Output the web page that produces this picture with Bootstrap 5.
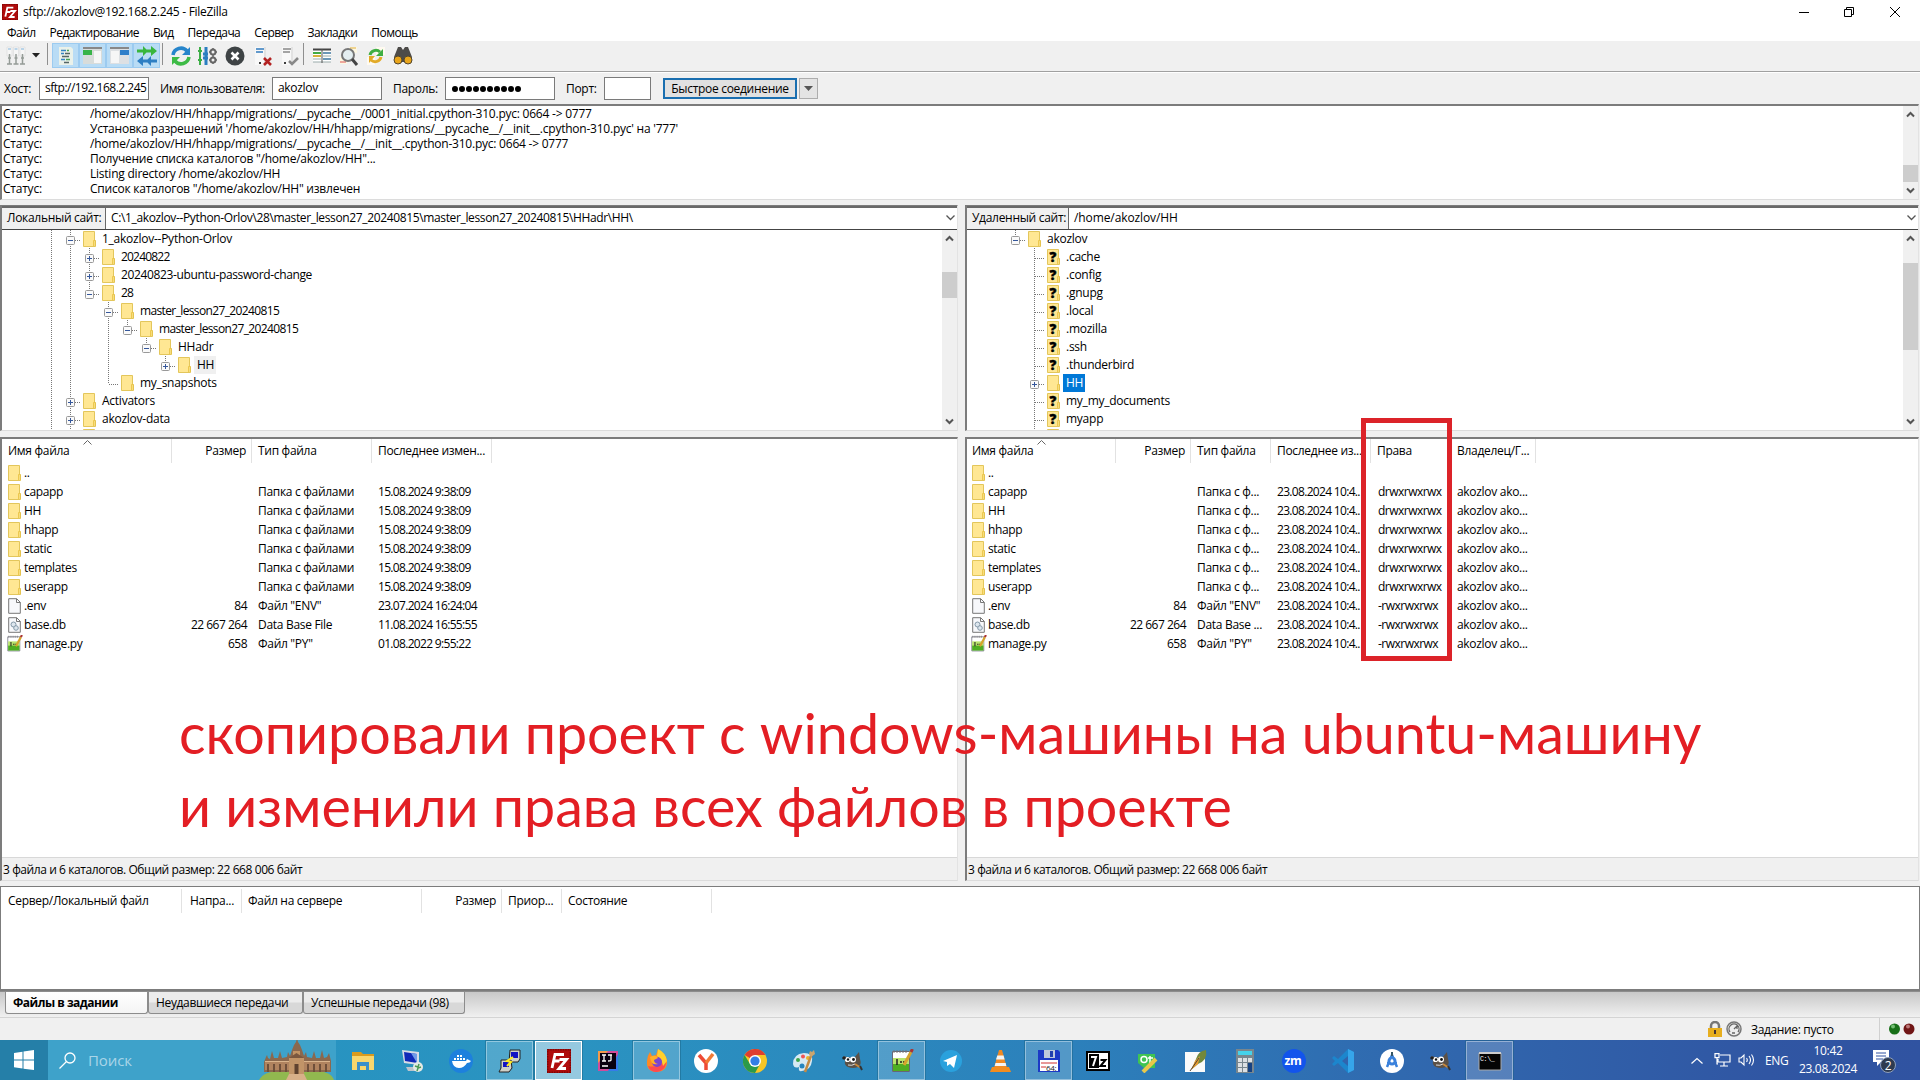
<!DOCTYPE html>
<html lang="ru">
<head>
<meta charset="utf-8">
<title>sftp://akozlov@192.168.2.245 - FileZilla</title>
<link href="https://cdn.jsdelivr.net/npm/bootstrap@5.3.0/dist/css/bootstrap.min.css" rel="stylesheet">
<style>
body{width:1920px;height:1080px;overflow:hidden;background:#f0f0f0;color:#000;font:12px/15px "Open Sans","Noto Sans",sans-serif;letter-spacing:-.3px;white-space:nowrap}
svg{display:block;flex:none}
.winbar{height:25px;padding:0 18px 2px 2px}
.winbar .caption{margin-left:5px;letter-spacing:-.28px}
.menus{height:16px;padding:0 0 2px 7px;gap:14px;letter-spacing:-.55px}
.tools{height:31px;border-bottom:1px solid #a0a0a0;box-shadow:0 1px #fff;padding:2px 0 0 2px}
.tools .cell{width:27px;height:25px;display:grid;place-items:center}
.tools .narrow{width:14px}
.tools .on{background:#b9dcf5;box-shadow:inset 0 0 0 1px #9ccbf0}
.bar{width:1px;height:22px;background:#8f8f8f}
.tools .bar{margin:0 4px 0 1px}
.tools .first{margin-left:4px}
.quick{height:32px;padding:0 0 0 4px}
.quick .field{height:23px;border:1px solid #7a7a7a;background:#fff;padding:2px 5px;overflow:hidden}
.quick label{flex:none}
.quick .go{height:21px;width:134px;border:2px solid #1a6fb0;background:#e1e1e1;text-align:center;line-height:18px;margin:1px 0 0 12px}
.quick .drop{height:21px;width:19px;border:1px solid #adadad;background:#e4e4e4;margin:1px 0 0 2px;display:grid;place-items:center}
.sunk{background:#fff;border:solid;border-width:2px 1px 1px 2px;border-color:#7c7c7c #e3e3e3 #dcdcdc #7c7c7c;overflow:hidden}
.log{height:96px;margin-right:1px;letter-spacing:-.23px}
.log .lines{padding:0 0 0 1px}
.log .lines span:first-child{width:87px}
.scroller{width:15px;background:#f0f0f0;padding:5px 0}
.scroller .thumb{width:15px;background:#cdcdcd}
.panes{gap:7px;padding-right:1px;margin-top:5px}
.site{height:24px;border-top:2px solid #696969;border-bottom:1px solid #444}
.site .tag{background:#f0f0f0;border-right:1px solid #696969;padding:2px 0 0 5px;height:21px}
.site .path{padding:2px 2px 0 5px}
.longpath{letter-spacing:-.36px}
.upper{height:226px;border-top-width:1px}
.node{height:18px}
.node .name{margin-left:3px;padding:0 2px 0 3px;line-height:17px;height:18px;letter-spacing:-.25px}
.node .t8{letter-spacing:-.8px}
.node .t6{letter-spacing:-.63px}
.node .t3{letter-spacing:-.36px}
.sel{background:#0078d7;color:#fff}
.dim{background:#f0f0f0}
.lower{height:444px;margin-top:6px}
.heads{height:24px}
.heads>span{border-right:1px solid #e2e2e2;padding:4px 5px 0 6px;overflow:hidden}
.heads .num,.files .num{text-align:right;padding-right:5px}
.gl{display:grid;grid-template-columns:170px 80px 120px 120px}
.gr{display:grid;grid-template-columns:149px 75px 80px 100px 79px 86px}
.files{height:19px;align-items:center}
.files>span{padding-left:6px}
.files .num{letter-spacing:-.5px}
.files .when{letter-spacing:-.68px}
.files .perm{letter-spacing:-.52px}
.gr>.perm,.gr>.own{padding-left:7px}
.files .nm{padding-left:3px;letter-spacing:-.35px}
.mark-sort{position:absolute;top:1px}
.totals{height:23px;background:#f0f0f0;border-top:1px solid #d8d8d8;padding:4px 0 0 1px;letter-spacing:-.42px}
.queue{height:105px;margin-top:5px;border-color:#7c7c7c;border-width:1px 1px 2px 1px}
.gq{display:grid;grid-template-columns:181px 60px 180px 80px 60px 150px;height:26px;padding-top:2px}
.strip{height:27px;border-top:1px solid #8c8c8c;border-bottom:1px solid #d4d4d4;background:linear-gradient(#c8c8c8,#f0f0f0);padding-left:5px}
.strip .tabb{height:22px;border:1px solid #8c8c8c;border-top:0;border-radius:0 0 3px 3px;background:linear-gradient(#ececec 48%,#d8d8d8 52%);padding:3px 0 0 7px;letter-spacing:-.35px}
.strip .cur{background:linear-gradient(#fff,#f4f4f4);font-weight:700;letter-spacing:-.5px}
.foot{height:22px;padding-right:5px}
.task{height:40px;background:linear-gradient(90deg,#2594c0 0,#2a93c1 30%,#2c80bb 56%,#3069af 73%,#3056a3 92%,#3053a1);color:#fff}
.start{width:48px;background:#257fa8;display:grid;place-items:center}
.seek{width:288px;background:#3ea2ca;color:#a9d5e8;font-size:15px;padding-left:11px}
.seek .word{margin-left:12px;letter-spacing:-.1px}
.apps{padding-left:2px}
.apps>div{width:47px;height:39px;margin:1px 1px 0;display:grid;place-items:center}
.apps .run{background:#ffffff30;box-shadow:inset 0 0 0 1px #ffffff60,0 0 0 1px #18607f70}
.apps .act{background:#ffffff80;box-shadow:inset 0 0 0 1px #fff,0 0 0 1px #18607f70}
.tray{padding-right:24px}
.clock{width:76px;line-height:18px;text-align:center}
.redbox{position:absolute;left:1361px;top:418px;width:91px;height:243px;border:5px solid #dc2329}
.remark{position:absolute;left:179px;top:696px;font:55.6px/73px Lato,"Open Sans",sans-serif;color:#e31e24;letter-spacing:0}
</style>
<script src="https://cdn.jsdelivr.net/npm/bootstrap@5.3.0/dist/js/bootstrap.bundle.min.js"></script>
</head>
<body class="position-relative">
<svg width="0" height="0" class="position-absolute">
 <symbol id="fz" viewBox="0 0 24 24"><rect width="24" height="24" fill="#b00c0c"/><rect x=".7" y=".7" width="22.6" height="22.6" fill="none" stroke="#7d0606" stroke-width="1.4" stroke-dasharray="1.5 1"/><path d="M5 19 8 5.500h9M6.500 12h6M12.500 10.500h7l-7.500 9h7" fill="none" stroke="#fff" stroke-width="2.800"/></symbol>
 <symbol id="fold" viewBox="0 0 13 16"><path d="M.5.5h11v9h1v6H.5z" fill="#ffe793" stroke="#e3c65b"/><path d="M10.500 15v-5.500h1.500v5.500" fill="#fff0a8" stroke="#e8bf3c" stroke-width=".8"/></symbol>
 <symbol id="page" viewBox="0 0 13 16"><path d="M.7.7h8l3.600 3.600v11H.7z" fill="#f7f8fb" stroke="#777"/><path d="M8.500.7v3.800h3.800" fill="none" stroke="#777"/></symbol>
 <symbol id="npp" viewBox="0 0 24 24"><path d="M2.500 2.500h17v20h-17z" fill="#fff" stroke="#667"/><path d="M3 9h16v7H3z" fill="#b9e36b"/><path d="M3 15h16v7H3z" fill="#4fae22"/><path d="M4 1v3M7 1v3M10 1v3M13 1v3M16 1v3" stroke="#777"/><path d="M7 10v6M10 13h2M13 13h2" stroke="#222" stroke-width="1.500"/><path d="M21 3 14 16" stroke="#d6a42c" stroke-width="3"/><path d="m22.500 0-1.500 3" stroke="#a33" stroke-width="3"/></symbol>
 <symbol id="gimp" viewBox="0 0 24 24"><path d="M2 7 6 8l7 1 5-6 1 7q2 6-2 8-5 2-10 0-4-2-3-6z" fill="#5b5147"/><circle cx="6.500" cy="10.500" r="2.600" fill="#fff"/><circle cx="12" cy="10.500" r="3" fill="#fff"/><circle cx="7" cy="10.500" r="1.200" fill="#111"/><circle cx="12.500" cy="10.500" r="1.400" fill="#111"/><ellipse cx="3" cy="9" rx="1.800" ry="1.500" fill="#222"/><path d="M7 16q4 1 7-1" stroke="#ddd" fill="none"/><path d="m14 15 6 4" stroke="#c98a3c" stroke-width="1.800"/><path d="m19 17 2 4" stroke="#333" stroke-width="2"/></symbol>
 <symbol id="srv" viewBox="0 0 20 20"><path d="M3 1h11v18H3z" fill="#e2e2e2"/><path d="M3 1h9v18H3z" fill="#f8f8f8"/></symbol>
 <symbol id="up" viewBox="0 0 9 7"><path d="M1 5.500 4.500 2 8 5.500" fill="none" stroke="#555" stroke-width="2"/></symbol>
 <symbol id="dn" viewBox="0 0 9 7"><path d="M1 1.500 4.500 5 8 1.500" fill="none" stroke="#555" stroke-width="2"/></symbol>
</svg>

<header class="bg-white">
 <div class="winbar d-flex align-items-center"><svg width="16" height="16"><use href="#fz"/></svg><span class="caption flex-grow-1">sftp://akozlov@192.168.2.245 - FileZilla</span>
  <svg width="104" height="12" fill="none" stroke="#000"><path d="M1 6.500h10M46.500 3.500h7v7h-7zM48.500 3v-1.500h7v7h-2M92 1l10 10M102 1 92 11"/></svg></div>
 <nav class="menus d-flex align-items-center"><span>Файл</span><span>Редактирование</span><span>Вид</span><span>Передача</span><span>Сервер</span><span>Закладки</span><span>Помощь</span></nav>
</header>

<div class="tools d-flex align-items-start">
 <div class="cell"><svg width="20" height="20"><path d="M1 1h5v9H1zM7.500 1h5v9h-5zM14 1h5v9h-5z" fill="#f6f6f6" stroke="#ddd" stroke-width=".7"/><path d="M2 3h3M8.500 3h3M15 3h3" stroke="#7fb3dc"/><path d="M3.500 8v10M10 8v10M16.500 8v10M1 18h5M7.500 18h5M14 18h5M2 12h3M8.500 12h3M15 12h3" stroke="#949b96" stroke-width="1.500" fill="none"/></svg></div>
 <div class="cell narrow"><svg width="8" height="5"><path d="M0 0h8L4 4.500z" fill="#222"/></svg></div>
 <div class="bar first"></div>
 <div class="cell on"><svg width="20" height="20"><path d="M3 1h12l2 2v16H3z" fill="#eaf1ea"/><path d="M5 4.500h5M5 7.500h3M5 13.500h4" stroke="#3584c4" stroke-width="1.300"/><path d="M9 7.500h5M6 10.500h7M8 16.500h5" stroke="#566" stroke-width="1.300"/><path d="M11 4.500h2M10 13.500h4" stroke="#47a356" stroke-width="1.300"/></svg></div>
 <div class="cell on"><svg width="20" height="20"><path d="M0 1h19v17H0z" fill="#d8dcda"/><path d="M0 2h19" stroke="#888" stroke-width="2"/><path d="M0 4h9v5H0z" fill="#38b449"/><path d="M11 5h7v12h-7z" fill="#f6f6f6"/></svg></div>
 <div class="cell on"><svg width="20" height="20"><path d="M0 1h19v17H0z" fill="#dde0e3"/><path d="M0 2h19" stroke="#888" stroke-width="2"/><path d="M10 4h9v5h-9z" fill="#2f7fc9"/><path d="M1 5h8v12H1z" fill="#f6f6f6"/></svg></div>
 <div class="cell on"><svg width="20" height="20"><path d="M0 3.500h6V0l5 5-5 5V6.500H0zM9 3.500h5V0l6 5-6 5V6.500H9z" fill="#38b63e"/><path d="M20 13.500h-6V10l-5 5 5 5v-3.500h6zM11 13.500H6V10l-6 5 6 5v-3.500h5z" fill="#2e7fc3"/></svg></div>
 <div class="bar first" style="margin-left:2px"></div>
 <div class="cell"><svg width="20" height="20" fill="none" stroke-width="3.500"><path d="M2 9a8 8 0 0 1 14-4" stroke="#2785cb"/><path d="M19 1v8h-8z" fill="#2785cb"/><path d="M18 11a8 8 0 0 1-14 4" stroke="#3dbb46"/><path d="M1 19v-8h8z" fill="#3dbb46"/></svg></div>
 <div class="cell"><svg width="20" height="20" fill="none"><path d="M2 1v18M0 5h4M0 14h4" stroke="#3dae46" stroke-width="2"/><path d="M8 1v18M5 8h5M5 12h5" stroke="#2b7fc0" stroke-width="3"/><circle cx="15" cy="6" r="2.500" stroke="#666" stroke-width="2"/><circle cx="15" cy="14" r="2.500" stroke="#666" stroke-width="2"/><path d="M15 2v1M15 9v2M15 17v1M11 6h1M18 6h1M11 14h1M18 14h1" stroke="#666" stroke-width="1.500"/></svg></div>
 <div class="cell"><svg width="20" height="20"><circle cx="10" cy="10" r="9.500" fill="#3e4345"/><path d="m6.500 6.500 7 7M13.500 6.500l-7 7" stroke="#fff" stroke-width="2.600"/></svg></div>
 <div class="cell"><svg width="20" height="20"><use href="#srv"/><path d="M4 3h8M4 6h7" stroke="#2f79bd" stroke-width="1.500"/><circle cx="8" cy="17" r="1"/><path d="m12 12 7 7M19 12l-7 7" stroke="#b32222" stroke-width="2.600"/></svg></div>
 <div class="cell"><svg width="20" height="20"><use href="#srv"/><path d="M4 3h8M4 6h7" stroke="#888" stroke-width="1.500"/><circle cx="6" cy="17" r="1"/><path d="m10 15 3 3 6-6" stroke="#888" stroke-width="2.600" fill="none"/></svg></div>
 <div class="bar"></div>
 <div class="cell"><svg width="20" height="20"><path d="M1 3h18v13H1z" fill="#fff"/><path d="M1 3.500h18" stroke="#444" stroke-width="2"/><path d="M1 7h8" stroke="#43ab43" stroke-width="2"/><path d="M11 7h8M11 13h8" stroke="#3d75a0" stroke-width="1.500"/><path d="M1 10h8" stroke="#d6b23b" stroke-width="2"/><path d="M1 13h8M1 16h18M11 10h8" stroke="#9aa"/><path d="M10 3v14" stroke="#555"/></svg></div>
 <div class="cell"><svg width="20" height="20"><path d="M10 1h8v6h-8zM1 11h7v7H1z" fill="#fdf7e2"/><path d="M11 2h6" stroke="#e0b040"/><path d="M1 16h6" stroke="#d55"/><circle cx="9" cy="9" r="6" fill="#e4eef0" stroke="#777" stroke-width="2"/><path d="m13 13 5 6" stroke="#444" stroke-width="3"/></svg></div>
 <div class="cell"><svg width="20" height="20" fill="none"><path d="M10 1h9v8h-9zM1 11h8v8H1z" fill="#fffaf0"/><path d="M4 9a6 6 0 0 1 10-3" stroke="#3fae43" stroke-width="3"/><path d="M17 3v7h-7z" fill="#3fae43"/><path d="M15 11a6 6 0 0 1-10 3" stroke="#e2aa27" stroke-width="3"/><path d="M3 17v-7h6z" fill="#e2aa27"/></svg></div>
 <div class="cell"><svg width="20" height="20"><path d="M5 1h3l2 3 2-3h3l4 10v5H1v-5z" fill="#4d4b49"/><circle cx="5" cy="14" r="4" fill="#e9a51b" stroke="#51462f"/><circle cx="15" cy="14" r="4" fill="#e9a51b" stroke="#51462f"/></svg></div>
</div>

<div class="quick d-flex align-items-center">
 <label style="width:35px">Хост:</label><div class="field" style="width:110px;letter-spacing:-.5px">sftp://192.168.2.245</div>
 <label style="width:123px;padding-left:11px;letter-spacing:-.42px">Имя пользователя:</label><div class="field" style="width:110px">akozlov</div>
 <label style="width:63px;padding-left:11px">Пароль:</label><div class="field" style="width:110px"><svg width="72" height="17"><path d="M4 9h64" stroke="#000" stroke-width="6" stroke-linecap="round" stroke-dasharray="0 7"/></svg></div>
 <label style="width:49px;padding-left:11px">Порт:</label><div class="field" style="width:47px"></div>
 <div class="go">Быстрое соединение</div><div class="drop"><svg width="9" height="5"><path d="M0 0h9L4.500 5z" fill="#555"/></svg></div>
</div>

<div class="log sunk d-flex justify-content-between">
 <div class="lines" id="log"></div>
 <div class="scroller d-flex flex-column align-items-center"><svg width="9" height="7"><use href="#up"/></svg><div class="thumb" style="height:17px;margin-top:47px"></div><svg width="9" height="7" class="mt-auto"><use href="#dn"/></svg></div>
</div>

<main class="panes d-flex">
 <section style="width:958px">
  <div class="upper sunk">
   <div class="site d-flex"><div class="tag" style="width:104px">Локальный сайт:</div><div class="path d-flex flex-grow-1 justify-content-between align-items-start"><span class="longpath">C:\1_akozlov--Python-Orlov\28\master_lesson27_20240815\master_lesson27_20240815\HHadr\HH\</span><svg width="9" height="7" class="mt-1"><path d="m.5 1.500 4 4 4-4" fill="none" stroke="#555" stroke-width="1.300"/></svg></div></div>
   <div class="d-flex justify-content-between" style="height:200px"><div style="padding-left:40px" id="lt"></div>
    <div class="scroller d-flex flex-column align-items-center"><svg width="9" height="7"><use href="#up"/></svg><div class="thumb" style="height:26px;margin-top:30px"></div><svg width="9" height="7" class="mt-auto"><use href="#dn"/></svg></div></div>
  </div>
  <div class="lower sunk d-flex flex-column position-relative">
   <svg class="mark-sort" style="left:81px" width="9" height="5"><path d="m.5 4.500 4-4 4 4" fill="none" stroke="#666"/></svg>
   <div class="heads gl"><span>Имя файла</span><span class="num">Размер</span><span>Тип файла</span><span>Последнее измен...</span></div>
   <div id="lf"></div><div class="totals mt-auto">3 файла и 6 каталогов. Общий размер: 22 668 006 байт</div>
  </div>
 </section>
 <section style="width:954px">
  <div class="upper sunk">
   <div class="site d-flex"><div class="tag" style="width:102px">Удаленный сайт:</div><div class="path d-flex flex-grow-1 justify-content-between align-items-start"><span style="letter-spacing:-.1px">/home/akozlov/HH</span><svg width="9" height="7" class="mt-1"><path d="m.5 1.500 4 4 4-4" fill="none" stroke="#555" stroke-width="1.300"/></svg></div></div>
   <div class="d-flex justify-content-between" style="height:200px"><div style="padding-left:39px" id="rt"></div>
    <div class="scroller d-flex flex-column align-items-center"><svg width="9" height="7"><use href="#up"/></svg><div class="thumb" style="height:87px;margin-top:21px"></div><svg width="9" height="7" class="mt-auto"><use href="#dn"/></svg></div></div>
  </div>
  <div class="lower sunk d-flex flex-column position-relative">
   <svg class="mark-sort" style="left:70px" width="9" height="5"><path d="m.5 4.500 4-4 4 4" fill="none" stroke="#666"/></svg>
   <div class="heads gr"><span style="padding-left:5px">Имя файла</span><span class="num">Размер</span><span>Тип файла</span><span style="padding-right:0">Последнее из...</span><span>Права</span><span style="padding-left:7px;padding-right:0">Владелец/Г...</span></div>
   <div id="rf"></div><div class="totals mt-auto">3 файла и 6 каталогов. Общий размер: 22 668 006 байт</div>
  </div>
 </section>
</main>

<div class="queue sunk"><div class="heads gq"><span style="padding-left:7px">Сервер/Локальный файл</span><span style="padding-left:8px">Напра...</span><span>Файл на сервере</span><span class="num">Размер</span><span style="padding-right:0">Приор...</span><span>Состояние</span></div></div>
<div class="strip d-flex"><div class="tabb cur" style="width:143px">Файлы в задании</div><div class="tabb" style="width:155px">Неудавшиеся передачи</div><div class="tabb" style="width:162px">Успешные передачи (98)</div></div>
<footer class="foot d-flex align-items-center justify-content-end">
 <svg width="16" height="17"><path d="M4 8V5a4 4 0 0 1 8 0v3" fill="none" stroke="#777" stroke-width="2.500"/><path d="M1 7h14v9H1z" fill="#e7ae1e"/><path d="M8 9v4" stroke="#433" stroke-width="2"/></svg>
 <svg width="16" height="16" style="margin-left:3px"><circle cx="8" cy="8" r="7" fill="#eee" stroke="#777" stroke-width="1.500"/><path d="M4 11a5 5 0 1 1 8 0M8 8l3-3v3M6 12h3" fill="none" stroke="#666" stroke-width="1.300"/></svg>
 <span style="width:137px;padding-left:9px;letter-spacing:-.35px">Задание: пусто</span><div class="bar" style="background:#d0d0d0;margin-right:8px"></div>
 <svg width="27" height="14"><circle cx="6.500" cy="7" r="5.500" fill="#176f17"/><circle cx="5" cy="4.500" r="2" fill="#72bd72"/><circle cx="21" cy="7" r="5.500" fill="#701515"/><circle cx="20" cy="4.500" r="2" fill="#b77"/></svg>
</footer>

<div class="task d-flex">
 <div class="start"><svg width="20" height="20" fill="#fff"><path d="m0 3 8.500-1.300v7.800H0zM9.500 1.500 20 0v9.500H9.500zM0 10.500h8.500v8L0 17.200zM9.500 10.500H20V20L9.500 18.700z"/></svg></div>
 <div class="seek d-flex align-items-center"><svg width="17" height="17" fill="none" stroke="#fff" stroke-width="1.300"><circle cx="11" cy="6" r="5"/><path d="m7.500 9.500-7 7"/></svg><span class="word flex-grow-1">Поиск</span>
  <svg width="78" height="40"><path d="M1 40q5-9 22-9h33q17 0 20 9z" fill="#91b84f"/><path d="m6 22 2-5 1-2 1 3 2 1 2-8 2 7 4 0 2-7 2 7 5-1 1-5 2 4 2-6 2-5 2-3 1-4 1 4 2 3 2 5 2 6 2-4 1 5 5 1 2-7 2 7 4 0 2-8 2 8 3-1 2-4 2 8v11H6z" fill="#8b684e"/><path d="M7 21h24v9H7zM46 21h26v9H46z" fill="#b0835f"/><path d="M31 18h15v17H31z" fill="#c19468"/><path d="M35 11h7v8h-7z" fill="#c29464"/><path d="m31 18 7.500-5 7.500 5z" fill="#7b583f"/><path d="M7 21.500h24M46 21.500h26" stroke="#dab48c"/><path d="M10 24v8M16 24v8M22 24v8M28 24v8M50 24v8M56 24v8M62 24v8M68 24v8" stroke="#6f4f3a" stroke-width="2"/><path d="M36.500 24h4v10h-4z" fill="#5f422f"/><path d="M31 34h15l3 6H28z" fill="#d8b089"/></svg></div>
 <div class="apps d-flex" id="apps"></div>
 <div class="tray d-flex align-items-center ms-auto">
  <svg width="12" height="7"><path d="m.5 6.500 5.500-5 5.500 5" fill="none" stroke="#fff" stroke-width="1.200"/></svg>
  <svg width="17" height="14" style="margin-left:11px" fill="none" stroke="#fff" stroke-width="1.200"><path d="M6 2h10v7H4V6M10 9v4M6 13h8M1 .7h4v4H1zM3 5v6h1"/></svg>
  <svg width="17" height="14" style="margin-left:7px" fill="none" stroke="#fff" stroke-width="1.100"><path d="M1 5h2l3-3v10L3 9H1zM8.500 5q1.500 2 0 4M11 3q3 4 0 8M13.500 1.500q4 5.500 0 11"/></svg>
  <span style="margin-left:10px;width:25px;font-size:12px">ENG</span>
  <div class="clock">10:42<br>23.08.2024</div>
  <svg width="24" height="26" style="margin-left:6px;margin-top:4px"><path d="M1 1h16v12H9l-4 4v-4H1z" fill="#fff"/><path d="M4 4h10M4 7h10M4 10h7" stroke="#3053a1"/><circle cx="16" cy="16" r="7.500" fill="#2e3b50" stroke="#8fa0bd"/><text x="12.800" y="20.500" font-size="12" fill="#fff">2</text></svg>
 </div>
</div>

<div class="redbox"></div>
<div class="remark">скопировали проект с windows-машины на ubuntu-машину<br>и изменили права всех файлов в проекте</div>

<script>
const $ = id => document.getElementById(id);
$('log').innerHTML = [
 '/home/akozlov/HH/hhapp/migrations/__pycache__/0001_initial.cpython-310.pyc: 0664 -> 0777',
 "Установка разрешений '/home/akozlov/HH/hhapp/migrations/__pycache__/__init__.cpython-310.pyc' на '777'",
 '/home/akozlov/HH/hhapp/migrations/__pycache__/__init__.cpython-310.pyc: 0664 -> 0777',
 'Получение списка каталогов "/home/akozlov/HH"...',
 'Listing directory /home/akozlov/HH',
 'Список каталогов "/home/akozlov/HH" извлечен'
].map(t => `<div class="d-flex"><span>Статус:</span><span>${t.replace('>', '&gt;')}</span></div>`).join('');

// Guide cells: v line, e empty, l corner, t tee, + and - expanders (upper part only when nothing follows: p, m)
function guide(c) {
 const d = {v:'M9.500 0v18', e:'', l:'M9.500 0v10M10 10.500h10', t:'M9.500 0v18M10 10.500h10'}[c];
 const box = '+-pm'.includes(c);
 const line = box ? ('+-'.includes(c) ? 'M9.500 0v18M14 10.500h6' : 'M9.500 0v10M14 10.500h6') : d;
 return `<svg width="19" height="18" fill="none"><path d="${line}" stroke="#777" stroke-dasharray="1 1"/>` +
  (box ? `<rect x="5.500" y="6.500" width="8" height="8" rx="1" fill="#fafafa" stroke="#999"/><path d="M7 10.500h5${'+p'.includes(c) ? 'M9.500 8v5' : ''}" stroke="#35579b"/>` : '') + '</svg>';
}
const folder = q => `<svg width="13" height="16"><use href="#fold"/>${q ? '<text x="2.500" y="13" font-size="13.500" font-weight="800" font-family="Open Sans" stroke="#000" stroke-width=".4">?</text>' : ''}</svg>`;
const tree = rows => rows.map(([g, n, q, k]) => `<div class="node d-flex align-items-center">${[...g].map(guide).join('')}<span style="width:3px"></span>${folder(q)}<span class="name ${k || ''}">${n}</span></div>`).join('');
$('lt').innerHTML = tree([['v-','1_akozlov--Python-Orlov',0,'t2'],['vv+','20240822',0,'t8'],['vv+','20240823-ubuntu-password-change',0,'t3'],['vvm','28',0,'t8'],['vve-','master_lesson27_20240815',0,'t6'],['vvevm','master_lesson27_20240815',0,'t6'],['vvevem','HHadr'],['vveveep','HH',0,'dim'],['vvel','my_snapshots'],['v+','Activators'],['v+','akozlov-data'],['v+','']]);
$('rt').innerHTML = tree([['m','akozlov'],...['.cache','.config','.gnupg','.local','.mozilla','.ssh','.thunderbird'].map(n => ['et', n, 1]),['e+','HH',0,'sel'],['et','my_my_documents',1],['et','myapp',1],['et','',0]]);

const icons = {
 d: folder(0), f: '<svg width="13" height="16"><use href="#page"/></svg>',
 b: '<svg width="13" height="16"><use href="#page"/><g fill="#dde6ee" stroke="#8498a8"><circle cx="5.500" cy="7.500" r="2.500"/><circle cx="8" cy="11" r="2.300"/></g></svg>',
 p: '<svg width="17" height="17" style="margin-left:-2px;margin-right:-2px"><use href="#npp"/></svg>'
};
const items = [['d','..','',''],['d','capapp','','Папка с файлами','15.08.2024 9:38:09'],['d','HH','','Папка с файлами','15.08.2024 9:38:09'],['d','hhapp','','Папка с файлами','15.08.2024 9:38:09'],['d','static','','Папка с файлами','15.08.2024 9:38:09'],['d','templates','','Папка с файлами','15.08.2024 9:38:09'],['d','userapp','','Папка с файлами','15.08.2024 9:38:09'],['f','.env','84','Файл "ENV"','23.07.2024 16:24:04'],['b','base.db','22 667 264','Data Base File','11.08.2024 16:55:55'],['p','manage.py','658','Файл "PY"','01.08.2022 9:55:22']];
const kinds = ['kind', 'when', 'perm', 'own'];
const row = (cls, i, rest) => `<div class="files ${cls}"><span class="d-flex align-items-center" style="padding-left:${cls === 'gl' ? 6 : 5}px">${icons[i[0]]}<span class="nm">${i[1]}</span></span><span class="num">${i[2]}</span>${rest.map((t, n) => `<span class="${kinds[n]}">${t}</span>`).join('')}</div>`;
$('lf').innerHTML = items.map(i => row('gl', i, [i[3], i[4] || ''])).join('');
$('rf').innerHTML = items.map((i, n) => row('gr', i, n ? [i[3].replace('Папка с файлами', 'Папка с ф...').replace('Base File', 'Base ...'), '23.08.2024 10:4..', (i[0] === 'd' ? 'd' : '-') + 'rwxrwxrwx', 'akozlov ako...'] : ['', '', '', ''])).join('');

const pic = s => `<svg width="24" height="24" viewBox="0 0 24 24" fill="none">${s}</svg>`;
const gimp = '<use href="#gimp"/>';
$('apps').innerHTML = [
 ['<path d="M1 3h9l2 2h11v4H1z" fill="#d99b1e"/><path d="M1 7h22v14H1z" fill="#f8d66d"/><path d="M6 13h12v8h-3v-4H9v4H6z" fill="#3a8fca"/>'],
 ['<path d="m2 1 17 2v13L4 14z" fill="#d7dce6"/><path d="m4 3 13 2v9L5 12z" fill="#1029b8"/><path d="m11 4 6 1v9z" fill="#6f9be8"/><path d="M6 18h11v4H8z" fill="#bcc4cc"/><circle cx="18" cy="18" r="5" fill="#e4e9e4"/><path d="m15 17 3 1 1-3M21 18l-3 1-1 3" stroke="#4a9b55" stroke-width="1.500"/>'],
 ['<circle cx="12" cy="12" r="12" fill="#1d80dd"/><path d="M3 12h14l1-2 2 1 2 1q-1 2-4 2-3 5-8 5-6 0-7-7zM5 9h2v2H5zM8 9h2v2H8zM8 6h2v2H8zM11 6h2v2h-2zM11 9h2v2h-2zM14 9h2v2h-2z" fill="#fff"/>'],
 ['<path d="M12 1h10v9l-2 3h-9zM3 11h10l1 8-3 4H1l2-4z" fill="#d0d0c8" stroke="#222"/><path d="M13 3h7v6h-7zM5 13h6v5H5z" fill="#1212c4"/><path d="m15 8-6 4 4 1-4 4" stroke="#ffeb22" stroke-width="2"/>', 'run'],
 ['<use href="#fz"/>', 'act'],
 ['<path d="M2 2h20v20H2z" fill="#d14b9a"/><path d="M2 2h10L2 14z" fill="#f39a49"/><path d="M22 5v17H12z" fill="#357bea"/><path d="M4 4h16v16H4z" fill="#09000f"/><path d="M6 6h4M8 6v6M6 12h4M12 6h4M15 6v5q0 1-3 1M6 17h6" stroke="#fff" stroke-width="1.300"/>'],
 ['<path d="M13 0q7 4 9 11 1 11-10 12Q1 23 2 12q0-5 3-9l2 4 4-1z" fill="#ff8a23"/><path d="M14 1q7 7 7 13-1 8-9 9-7 0-9-6 8 2 15-3 1-4-3-8z" fill="#ff4a50"/><path d="M13 0q8 4 9 12l-4 5q-1-8-6-10z" fill="#ffd02e"/><circle cx="12" cy="13" r="5" fill="#7b45cf"/><path d="M5 8q6-3 8 1l-4 2q0 3 4 4-7 2-8-7z" fill="#ffaf28"/>', 'run'],
 ['<circle cx="12" cy="12" r="12" fill="#fff"/><path d="m5 6 7 8v7" stroke="#ee4b35" stroke-width="3.500"/><path d="m19 5-7 9" stroke="#f07b35" stroke-width="3.500"/>'],
 ['<circle cx="12" cy="12" r="12" fill="#f7c626"/><path d="M12 12 1.600 6A12 12 0 0 1 22.400 6H12z" fill="#df3e30"/><path d="M1.600 6A12 12 0 0 0 12 24l5-9-5 2-5-2z" fill="#2b9a4a"/><circle cx="12" cy="12" r="6" fill="#fff"/><circle cx="12" cy="12" r="4.600" fill="#337ee5"/>'],
 ['<path d="M1 15Q1 5 12 4q9 0 8 8-1 9-10 10-4 1-3-4-5 2-6-3z" fill="#d6e9f3"/><g><circle cx="6" cy="11" r="2" fill="#3ca54b"/><circle cx="11" cy="7.500" r="2" fill="#e55"/><circle cx="16" cy="9" r="2" fill="#eab32a"/><circle cx="10" cy="17" r="2.500" fill="#2684be"/></g><path d="m20 4-7 19" stroke="#c58a43" stroke-width="2.500"/><path d="m17 5 1-3 2 1 2-2 1 4-4 3z" fill="#c9a56f"/>'],
 [gimp], ['<use href="#npp"/>', 'run'],
 ['<circle cx="12" cy="12" r="11" fill="#2aa1dd"/><path d="m4 12 14-6-3 13-4-4-3 2v-4z" fill="#fff"/>'],
 ['<path d="m11 1 3 0 5 18H6z" fill="#f08a24"/><path d="m9.300 6.500h6.300l1 4H8zM7.500 14h10.200l.6 3H6.700z" fill="#f4f4f4"/><path d="M4 18h17l2 5H2z" fill="#f28c1e"/>'.replace('m9.300 6.500h', 'M9.300 6.500h')],
 ['<path d="M1 1h20l2 2v20H1z" fill="#1c39c5"/><path d="M7 1h11v8H7z" fill="#bec8dc"/><path d="M13 2h3v6h-3z" fill="#203fae"/><path d="M3 11h18v11H3z" fill="#fff"/><path d="M4 14h16M4 18h5" stroke="#d03030"/><text x="9" y="21.500" font-size="8" fill="#222">64:</text>', 'run'],
 ['<path d="M1 3h22v18H1z" fill="#fff" stroke="#000" stroke-width="2"/><path d="M3 5h10v14H3z" fill="#000"/><path d="M5 8h5l-3 9" stroke="#fff" stroke-width="2"/><path d="M14.500 11h5l-5 6h5.500" stroke="#000" stroke-width="2"/>'],
 ['<path d="M3 5h17v14H9l-6-5z" fill="#3fc453"/><circle cx="9" cy="10.500" r="3" stroke="#fff" stroke-width="1.500"/><path d="M15 7v7M13 9h5" stroke="#fff" stroke-width="1.500"/><path d="m21 10-10 10-3 3" stroke="#e8c84b" stroke-width="4"/>'],
 ['<path d="M1 3h20v20H1z" fill="#fafafa"/><path d="M22 1q2 10-8 14l-6 5 4-10Q14 2 22 1z" fill="#72883c"/><path d="m7 21 4-9 5-5-2 8z" fill="#e59a30"/><path d="m6 22 9-13" stroke="#543"/>'],
 ['<path d="M3 0h18v24H3z" fill="#78868e"/><path d="M5 2h14v4H5z" fill="#45d2ea"/><path d="M5 9h4v4H5zM10 9h4v4h-4zM15 9h4v4h-4zM5 14h4v4H5zM10 14h4v4h-4zM5 19h4v4H5zM10 19h4v4h-4z" fill="#dce0e3"/><path d="M15 14h4v9h-4z" fill="#174282"/>'],
 ['<circle cx="12" cy="12" r="12" fill="#1254ec"/><text x="2.500" y="16" font-size="12" font-weight="700" fill="#fff">zm</text>'],
 ['<path d="m17 0 6 3v18l-6 3L7 14l-4 3-2-2 3-3-3-3 2-2 4 3z" fill="#1c86cd"/><path d="m17 0 6 3v18l-6 3z" fill="#36a5ea"/><path d="m17 7-6 5 6 5z" fill="#3164ad"/>'],
 ['<circle cx="12" cy="12" r="12" fill="#fff"/><path d="M12 6 7 18M12 6l5 12M7 14h10" stroke="#3b82dc" stroke-width="2.500"/><circle cx="12" cy="12" r="3.500" stroke="#3b82dc" stroke-width="2"/><circle cx="12" cy="12" r="1.500" fill="#fff"/><path d="M12 3v4" stroke="#356" stroke-width="2"/>'],
 [gimp],
 ['<path d="M1 4h22v17H1z" fill="#050505" stroke="#aaa"/><path d="M1 4h22" stroke="#ccc" stroke-width="2"/><text x="2" y="12" font-size="6.500" fill="#fff" font-family="Liberation Mono">C:\\_</text>', 'run']
].map(([s, k]) => `<div class="${k || ''}">${pic(s)}</div>`).join('');
</script>
</body>
</html>
